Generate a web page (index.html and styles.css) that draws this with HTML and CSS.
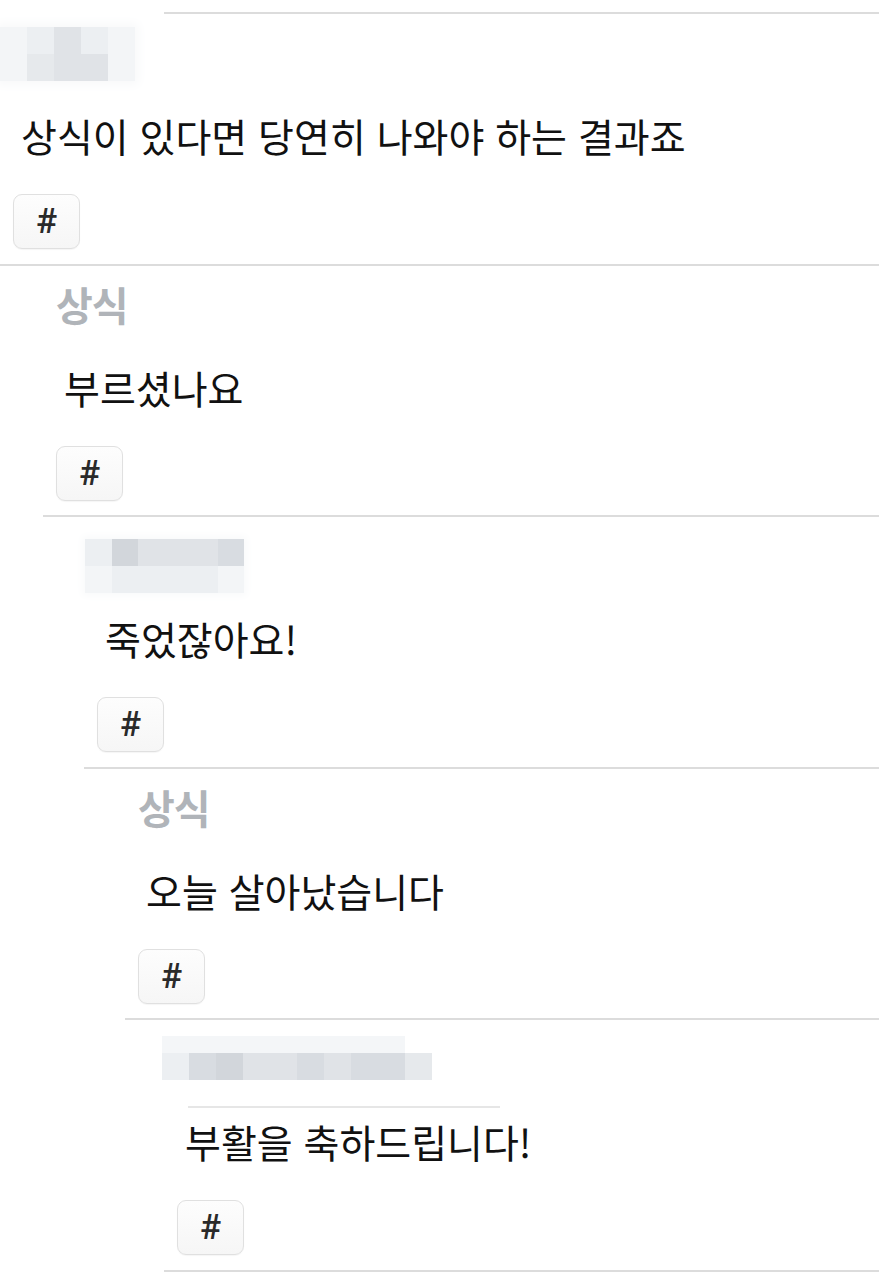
FILE: index.html
```html
<!DOCTYPE html>
<html lang="ko">
<head>
<meta charset="utf-8">
<link rel="stylesheet" href="styles.css">
<title>댓글</title>
</head>
<body>
<div class="thread">
  <div class="comment lv4 prev"><div class="inner"></div></div>

  <div class="comment lv0">
    <div class="inner">
      <div class="name">
        <div class="blur blur-a">
          <i class="s0"></i><i class="s1"></i><i class="s3"></i><i class="s1"></i><i class="s0"></i>
          <i class="s0"></i><i class="s2"></i><i class="s3"></i><i class="s3"></i><i class="s0"></i>
        </div>
      </div>
      <p class="body">상식이 있다면 당연히 나와야 하는 결과죠</p>
      <button class="chip">#</button>
    </div>
  </div>

  <div class="comment lv1">
    <div class="inner">
      <div class="name"><span class="nick">상식</span></div>
      <p class="body">부르셨나요</p>
      <button class="chip">#</button>
    </div>
  </div>

  <div class="comment lv2">
    <div class="inner">
      <div class="name">
        <div class="blur blur-b">
          <i class="s1"></i><i class="s5"></i><i class="s3"></i><i class="s3"></i><i class="s3"></i><i class="s4"></i>
          <i class="s0"></i><i class="s1"></i><i class="s1"></i><i class="s1"></i><i class="s1"></i><i class="s0"></i>
        </div>
      </div>
      <p class="body">죽었잖아요!</p>
      <button class="chip">#</button>
    </div>
  </div>

  <div class="comment lv3">
    <div class="inner">
      <div class="name"><span class="nick">상식</span></div>
      <p class="body">오늘 살아났습니다</p>
      <button class="chip">#</button>
    </div>
  </div>

  <div class="comment lv4">
    <div class="inner">
      <div class="name">
        <div class="blur blur-c">
          <i class="f"></i><i class="f"></i><i class="f"></i><i class="f"></i><i class="f"></i><i class="f"></i><i class="f"></i><i class="f"></i><i class="f"></i><i class="w"></i>
          <i class="s1"></i><i class="s4"></i><i class="s5"></i><i class="s3"></i><i class="s3"></i><i class="s4"></i><i class="s3"></i><i class="s4"></i><i class="s4"></i><i class="s2"></i>
          <span class="streak"></span>
        </div>
      </div>
      <p class="body">부활을 축하드립니다!</p>
      <button class="chip">#</button>
    </div>
  </div>
</div>
</body>
</html>
```

FILE: styles.css
```css
* { box-sizing: border-box; }

html, body {
  margin: 0;
  padding: 0;
  background: #ffffff;
}

body {
  font-family: "Noto Sans CJK KR", "Noto Sans", sans-serif;
  color: #111111;
  width: 879px;
  overflow: hidden;
}

.thread {
  display: flex;
  flex-direction: column;
}

.comment.lv0 { padding-left: 0; }
.comment.lv1 { padding-left: 43px; }
.comment.lv2 { padding-left: 84px; }
.comment.lv3 { padding-left: 125px; }
.comment.lv4 { padding-left: 164px; }

.inner {
  border-bottom: 2px solid #dcdcdc;
  padding: 18px 0 14.6px 0;
  display: flex;
  flex-direction: column;
  align-items: flex-start;
}

.prev .inner {
  padding: 0;
  height: 14px;
}

.name {
  height: 40px;
  margin-left: 13px;
  position: relative;
}

.nick {
  display: block;
  font-size: 40px;
  line-height: 40px;
  font-weight: 700;
  color: #b0b4b9;
  letter-spacing: -1px;
}

.body {
  margin: 38px 0 0 21px;
  font-size: 39px;
  line-height: 50px;
  font-weight: 400;
  color: #111111;
  white-space: nowrap;
}

.chip {
  margin: 34px 0 0 13px;
  width: 67px;
  height: 55px;
  border: 1.5px solid #e0e0e0;
  border-radius: 9px;
  background: linear-gradient(#fdfdfd, #f6f6f6);
  box-shadow: 0 1px 1px rgba(0, 0, 0, 0.04);
  font-family: Roboto, "Noto Sans", sans-serif;
  font-size: 35px;
  font-weight: 500;
  color: #2a2a2a;
  padding: 0;
  display: flex;
  align-items: center;
  justify-content: center;
}

/* pixelated (mosaic) usernames */
.blur {
  display: grid;
  grid-auto-rows: 27px;
  position: relative;
}

.blur i {
  display: block;
}

.blur-a {
  grid-template-columns: repeat(5, 27px);
  margin: -5px 0 0 -13px;
  box-shadow: 0 0 10px 4px #f8f9fa;
}

.blur-b {
  grid-template-columns: repeat(6, 26.5px);
  margin: 4px 0 0 -12px;
  box-shadow: 0 0 8px 3px #f9fafb;
}

.blur-c {
  grid-template-columns: repeat(10, 27px);
  grid-template-rows: 17px 27px;
  margin: -2px 0 0 -15px;
}

.s0 { background: #f3f5f7; }
.s1 { background: #eceff2; }
.s2 { background: #e6e9ec; }
.s3 { background: #e0e3e7; }
.s4 { background: #d8dce1; }
.s5 { background: #d2d6db; }
.f  { background: #f4f6f8; }
.w  { background: transparent; }

.streak {
  position: absolute;
  left: 26px;
  top: 70px;
  width: 312px;
  height: 2px;
  background: #e6e6e6;
}
```
